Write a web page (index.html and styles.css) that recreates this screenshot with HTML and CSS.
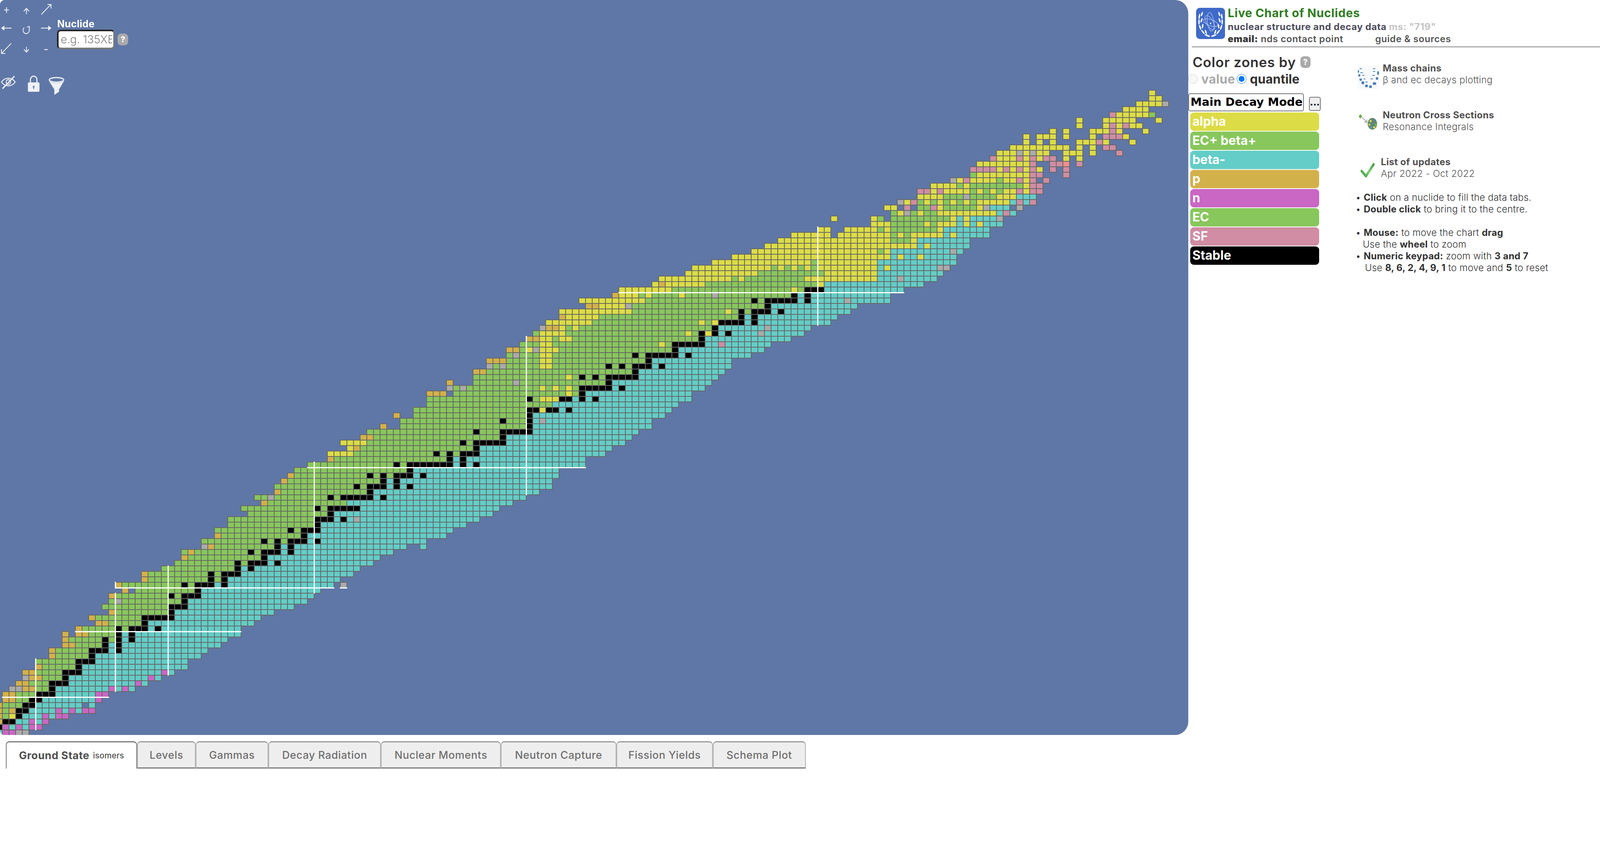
FILE: index.html
```html
<!DOCTYPE html>
<html lang="en">
<head>
<meta charset="utf-8">
<title>Live Chart of Nuclides</title>
<link rel="stylesheet" href="styles.css">
</head>
<body>
<div class="page">
  <main class="main">
    <section class="chart" id="chart-box">
      <canvas id="chart" class="chart-canvas" width="3042" height="1882"></canvas>
      <svg class="controls" viewBox="0 0 180 245" preserveAspectRatio="none">
        <g class="ln">
          <path d="M11 25.5H25M18 18.5V33"/>
          <path d="M73 36V22M65.5 29L73 21.5L80.5 29"/>
          <path d="M114 37L141 11M131 11.5H141V22"/>
          <path d="M12 72H32"/>
          <path d="M113 72H133"/>
          <path d="M31 111L4 137M4 126V137H15"/>
          <path d="M73 120V133M66 126.5L73 133.5L80 126.5"/>
          <path d="M122 127H132"/>
          <path d="M67 70.500A8.700 8.700 0 1 0 80.700 75"/>
          <path d="M74.500 69.500L81 68V75"/>
        </g>
        <path class="fl" d="M3 72L12 65.5V78.5Z"/>
        <path class="fl" d="M142 72L133 65.5V78.5Z"/>
        <path class="eye" d="M4 210C14 197 32 197 42 210C32 223 14 223 4 210Z"/>
        <path class="eye" d="M17 210a6 6 0 0 1 12 0a6 6 0 0 1 -12 0"/>
        <path class="slash" d="M8 226L39 196"/>
        <path class="eye thick" d="M84 212V204a9 9 0 0 1 18 0V212"/>
        <rect class="fl" x="77" y="211" width="32" height="24" rx="3"/>
        <circle class="hole" cx="93" cy="222" r="2.5"/>
        <rect class="hole" x="92" y="222" width="2" height="6"/>
        <path class="fl" d="M135 207C142 214 170 214 177 207L163 229V235L150 243V229Z"/>
        <ellipse class="eye thick" cx="156" cy="204.5" rx="20" ry="6"/>
      </svg>
      <div class="finder">
        <label class="finder-label" for="nuc">Nuclide</label>
        <div class="finder-row">
          <input id="nuc" class="finder-input" type="text" placeholder="e.g. 135XE">
          <span class="help">?</span>
        </div>
      </div>
    </section>
    <nav class="tabs">
      <div class="tab active">Ground State <small>isomers</small></div>
      <div class="tab">Levels</div>
      <div class="tab">Gammas</div>
      <div class="tab">Decay Radiation</div>
      <div class="tab">Nuclear Moments</div>
      <div class="tab">Neutron Capture</div>
      <div class="tab">Fission Yields</div>
      <div class="tab">Schema Plot</div>
    </nav>
  </main>
  <aside class="side">
    <header class="head">
      <svg class="logo" viewBox="0 0 80 80" preserveAspectRatio="none">
        <rect width="80" height="80" rx="10" fill="#3f6ac8"/>
        <g fill="#fff">
          <ellipse cx="9" cy="22" rx="2" ry="7" transform="rotate(10 9 22)"/>
          <ellipse cx="16" cy="16" rx="2" ry="6" transform="rotate(20 16 16)"/>
          <ellipse cx="8" cy="36" rx="2" ry="7"/>
          <ellipse cx="15" cy="32" rx="2" ry="6" transform="rotate(20 15 32)"/>
          <ellipse cx="11" cy="50" rx="2" ry="7" transform="rotate(-20 11 50)"/>
          <ellipse cx="18" cy="47" rx="2" ry="6" transform="rotate(10 18 47)"/>
          <ellipse cx="19" cy="62" rx="2" ry="7" transform="rotate(-40 19 62)"/>
          <ellipse cx="27" cy="62" rx="2" ry="6" transform="rotate(-20 27 62)"/>
          <ellipse cx="31" cy="71" rx="2" ry="8" transform="rotate(-70 31 71)"/>
          <ellipse cx="71" cy="22" rx="2" ry="7" transform="rotate(-10 71 22)"/>
          <ellipse cx="64" cy="16" rx="2" ry="6" transform="rotate(-20 64 16)"/>
          <ellipse cx="72" cy="36" rx="2" ry="7"/>
          <ellipse cx="65" cy="32" rx="2" ry="6" transform="rotate(-20 65 32)"/>
          <ellipse cx="69" cy="50" rx="2" ry="7" transform="rotate(20 69 50)"/>
          <ellipse cx="62" cy="47" rx="2" ry="6" transform="rotate(-10 62 47)"/>
          <ellipse cx="61" cy="62" rx="2" ry="7" transform="rotate(40 61 62)"/>
          <ellipse cx="53" cy="62" rx="2" ry="6" transform="rotate(20 53 62)"/>
          <ellipse cx="49" cy="71" rx="2" ry="8" transform="rotate(70 49 71)"/>
        </g>
        <g fill="none" stroke="#c4d2f2" stroke-width="1.2">
          <ellipse cx="40" cy="36" rx="9" ry="24" transform="rotate(-8 40 36)"/>
          <ellipse cx="40" cy="38" rx="21" ry="8" transform="rotate(18 40 38)"/>
          <ellipse cx="38" cy="38" rx="9" ry="21" transform="rotate(-32 38 38)"/>
        </g>
        <circle cx="40" cy="40" r="2" fill="#fff"/>
      </svg>
      <div class="brand">
        <h1 class="brand-title">Live Chart of Nuclides</h1>
        <p class="brand-sub">nuclear structure and decay data <span class="ms">ms: "719"</span></p>
        <p class="brand-links"><span><b>email:</b> nds contact point</span><span class="guide">guide &amp; sources</span></p>
      </div>
    </header>
    <div class="columns">
      <div class="zones">
        <h2 class="zones-title">Color zones by <span class="help large">?</span></h2>
        <div class="radios">
          <input class="radio" type="radio" name="mode" disabled>
          <span class="radio-off">value</span>
          <input class="radio" type="radio" name="mode" checked>
          <span class="radio-on">quantile</span>
        </div>
        <div class="select-row">
          <div class="select">Main Decay Mode</div>
          <button class="more" type="button">...</button>
        </div>
        <ul class="legend">
          <li class="alpha">alpha</li>
          <li class="ecb">EC+ beta+</li>
          <li class="beta">beta-</li>
          <li class="proton">p</li>
          <li class="neutron">n</li>
          <li class="ec">EC</li>
          <li class="sf">SF</li>
          <li class="stable">Stable</li>
        </ul>
      </div>
      <div class="info">
        <div class="link">
          <svg class="ico ico-mass" viewBox="0 0 60 59" preserveAspectRatio="none">
            <rect width="60" height="59" fill="#f7f9fb"/>
            <g fill="#4f7fb5">
              <rect x="5" y="6" width="6" height="2"/><rect x="42" y="6" width="6" height="2"/>
              <ellipse cx="1.5" cy="14" rx="2" ry="3.5"/><rect x="7" y="16" width="7" height="2"/>
              <rect x="42" y="13" width="6" height="2"/><ellipse cx="56" cy="18" rx="2.5" ry="5"/>
              <ellipse cx="4" cy="24" rx="3" ry="3"/><rect x="12" y="23" width="6" height="2"/>
              <rect x="40" y="23" width="7" height="2"/><ellipse cx="53" cy="32" rx="3.5" ry="3.5"/>
              <ellipse cx="8" cy="35" rx="3.5" ry="3"/><rect x="16" y="32" width="5" height="2"/>
              <rect x="35" y="32" width="7" height="2"/><ellipse cx="14" cy="43" rx="4" ry="4"/>
              <rect x="21" y="40" width="6" height="2"/><ellipse cx="46" cy="45" rx="5" ry="3.5"/>
              <ellipse cx="24" cy="51" rx="4" ry="3.5"/><ellipse cx="35" cy="53" rx="4" ry="3.5"/>
            </g>
          </svg>
          <div class="link-text"><b>Mass chains</b><span>β and ec decays plotting</span></div>
        </div>
        <div class="link">
          <svg class="ico ico-neutron" viewBox="0 0 51 40" preserveAspectRatio="none">
            <ellipse cx="4" cy="5" rx="4" ry="4.5" fill="#76a84e"/>
            <path d="M9 8L22 20M22 13V20H15" fill="none" stroke="#9a9a9a" stroke-width="1.8"/>
            <ellipse cx="37" cy="24" rx="13" ry="15" fill="#5f8a6a"/>
            <circle cx="32" cy="17" r="3" fill="#d7d94a"/><circle cx="42" cy="15" r="3" fill="#5f80b8"/>
            <circle cx="29" cy="26" r="3" fill="#b8cf50"/><circle cx="38" cy="24" r="3" fill="#5f80b8"/>
            <circle cx="46" cy="26" r="3" fill="#7bb552"/><circle cx="34" cy="33" r="3" fill="#6f8fc0"/>
            <circle cx="42" cy="33" r="3" fill="#d7d94a"/>
          </svg>
          <div class="link-text"><b>Neutron Cross Sections</b><span>Resonance Integrals</span></div>
        </div>
        <div class="link updates">
          <svg class="ico ico-check" viewBox="0 0 39 38" preserveAspectRatio="none">
            <defs>
              <linearGradient id="chk" x1="0" y1="1" x2="1" y2="0">
                <stop offset="0" stop-color="#3f9a3e"/><stop offset=".5" stop-color="#7fd07a"/><stop offset="1" stop-color="#4f9f4a"/>
              </linearGradient>
            </defs>
            <path d="M3 21L15 34L36 4" fill="none" stroke="url(#chk)" stroke-width="6.5" stroke-linecap="round" stroke-linejoin="round"/>
          </svg>
          <div class="link-text"><b>List of updates</b><span>Apr 2022 - Oct 2022</span></div>
        </div>
        <div class="howto">
          <p>• <b>Click</b> on a nuclide to fill the data tabs.</p>
          <p>• <b>Double click</b> to bring it to the centre.</p>
          <p class="gap">• <b>Mouse:</b> to move the chart <b>drag</b></p>
          <p class="ind1">Use the <b>wheel</b> to zoom</p>
          <p>• <b>Numeric keypad:</b> zoom with <b>3 and 7</b></p>
          <p class="ind2">Use <b>8, 6, 2, 4, 9, 1</b> to move and <b>5</b> to reset</p>
        </div>
      </div>
    </div>
  </aside>
</div>
<script src="chart.js"></script>
</body>
</html>
```
FILE: styles.css
```css
:root { --x: calc(100vw / 4418); }
* { box-sizing: border-box; }
html, body { margin: 0; padding: 0; background: #fff; overflow: hidden; }
body { font-family: "Inter", "Noto Sans", "Liberation Sans", sans-serif; color: #333; }
h1, h2, p, ul { margin: 0; padding: 0; }
ul { list-style: none; }

.page { display: flex; width: 100vw; height: 100vh; overflow: hidden; }
.main { flex: 0 0 calc(var(--x) * 3281); display: flex; flex-direction: column; min-width: 0; }

.chart { position: relative; width: 100%; height: 1882px; background: #5f77a6; border-radius: 12px 34px 34px 12px; overflow: hidden; }
.chart-canvas { display: block; }
.controls { position: absolute; left: 0; top: 0; width: calc(var(--x) * 180); height: 245px; }
.ln { fill: none; stroke: #eef1f6; stroke-width: 2.2; }
.fl { fill: #eef1f6; }
.eye { fill: none; stroke: #eef1f6; stroke-width: 2.4; }
.eye.thick { stroke-width: 3; }
.slash { stroke: #eef1f6; stroke-width: 3.4; stroke-linecap: round; }
.hole { fill: #5f77a6; }

.finder { position: absolute; left: calc(var(--x) * 158); top: 46px; display: flex; flex-direction: column; }
.finder-label { font-size: 25px; line-height: 30px; font-weight: 700; color: #fff; letter-spacing: .3px; }
.finder-row { display: flex; align-items: center; gap: calc(var(--x) * 8); }
.finder-input { width: calc(var(--x) * 159); height: 50px; padding: 0 3px 0 5px; border: 4px solid; border-color: #222 #777 #777 #222; border-radius: 9px; background: #fff; font: 300 28px "Inter", sans-serif; outline: none; }
.finder-input::placeholder { color: #7d7d7d; opacity: 1; }
.help { display: flex; align-items: center; justify-content: center; width: calc(var(--x) * 29); height: 30px; border-radius: 9px; background: #aaa; color: #fff; font-size: 20px; font-weight: 800; }

.tabs { display: flex; margin: 16px 0 0 calc(var(--x) * 16); }
.tab { flex: none; height: 70px; display: flex; align-items: center; justify-content: center; gap: 9px; background: #eee; border: 2px solid #b4b4b4; border-top: 3px solid #9a9a9a; border-bottom: 3px solid #7a7a7a; border-radius: 9px 9px 0 0; color: #6e6e6e; font-size: 27px; font-weight: 500; letter-spacing: .6px; }
.tab:nth-child(1) { width: calc(var(--x) * 363); }
.tab:nth-child(2) { width: calc(var(--x) * 161); }
.tab:nth-child(3) { width: calc(var(--x) * 201); }
.tab:nth-child(4) { width: calc(var(--x) * 311); }
.tab:nth-child(5) { width: calc(var(--x) * 331); }
.tab:nth-child(6) { width: calc(var(--x) * 319); }
.tab:nth-child(7) { width: calc(var(--x) * 266); }
.tab:nth-child(8) { width: calc(var(--x) * 257); }
.tab.active { background: #fff; border-color: #7a7a7a; border-bottom: 0; color: #4f4f4f; font-weight: 700; }
.tab small { font-size: 21px; font-weight: 500; letter-spacing: 0; color: #555; }

.side { flex: 1 1 auto; min-width: 0; display: flex; flex-direction: column; }
.head { display: flex; height: 121px; margin-left: calc(var(--x) * 10); padding: 20px 0 0 calc(var(--x) * 12); border-bottom: 2px solid #888; }
.logo { flex: none; width: calc(var(--x) * 80); height: 80px; }
.brand { display: flex; flex-direction: column; margin: -7px 0 0 calc(var(--x) * 7); }
.brand-title { font-size: 30px; line-height: 41px; font-weight: 700; color: #2f7d22; letter-spacing: .7px; }
.brand-sub { font-size: 24px; line-height: 30px; font-weight: 700; color: #4c4c5c; letter-spacing: .6px; }
.ms { color: #c4c4c4; }
.brand-links { font-size: 24px; line-height: 32px; font-weight: 600; color: #555; letter-spacing: .55px; display: flex; gap: calc(var(--x) * 88); }
.brand-links b { color: #3a3a3a; }

.columns { display: flex; }
.zones { flex: 0 0 calc(var(--x) * 462); display: flex; flex-direction: column; padding-top: 15px; }
.zones-title { margin-left: calc(var(--x) * 12); font-size: 35px; line-height: 46px; font-weight: 600; letter-spacing: .85px; color: #333; display: flex; align-items: center; gap: calc(var(--x) * 12); }
.help.large { width: calc(var(--x) * 28); font-size: 20px; letter-spacing: 0; }
.radios { display: flex; align-items: center; height: 40px; }
.radio { width: calc(var(--x) * 26); height: 26px; margin: 0; flex: none; }
.radio-off { margin: 0 calc(var(--x) * 5) 0 calc(var(--x) * 10); font-size: 32px; font-weight: 700; letter-spacing: .3px; color: #aaa; }
.radio-on { margin-left: calc(var(--x) * 10); font-size: 32px; font-weight: 700; color: #333; }
.select-row { display: flex; align-items: flex-end; gap: calc(var(--x) * 14); margin-top: 17px; }
.select { width: calc(var(--x) * 319); height: 46px; border: 2px solid #777; border-radius: 5px; background: #fff; padding-left: 4px; font: 700 29px/40px "DejaVu Sans", sans-serif; color: #000; white-space: nowrap; overflow: hidden; }
.more { width: calc(var(--x) * 33); height: 36px; padding: 0 0 8px; border: 2px solid #767676; border-radius: 5px; background: #efefef; font: 700 22px "DejaVu Sans", sans-serif; color: #111; margin-bottom: 1px; }
.legend { display: flex; flex-direction: column; gap: 2px; width: calc(var(--x) * 356); margin: 3px 0 0 calc(var(--x) * 6); }
.legend li { height: 47px; padding-left: 5px; border-radius: 9px; color: #fff; font-size: 32px; line-height: 46px; font-weight: 700; }
.alpha { background: #dcdc46; }
.ecb, .ec { background: #88c75c; }
.beta { background: #63cdc7; }
.proton { background: #d3b14a; }
.neutron { background: #ca66c4; }
.sf { background: #d08da3; }
.stable { background: #000; }

.info { flex: 1 1 auto; display: flex; flex-direction: column; padding-top: 39px; }
.link { display: flex; height: 120px; padding-left: calc(var(--x) * 6); align-items: flex-start; }
.ico { flex: none; }
.ico-mass { width: calc(var(--x) * 60); height: 59px; margin: 9px calc(var(--x) * 9) 0 0; }
.ico-neutron { width: calc(var(--x) * 51); height: 40px; margin: 13px calc(var(--x) * 14) 0 calc(var(--x) * 4); }
.ico-check { width: calc(var(--x) * 39); height: 38px; margin: 17px calc(var(--x) * 17) 0 calc(var(--x) * 8); }
.updates { height: 91px; }
.link-text { display: flex; flex-direction: column; font-size: 24px; line-height: 30px; color: #555; font-weight: 300; letter-spacing: .35px; }
.link-text b { font-weight: 700; color: #505050; }
.howto { font-size: 24px; line-height: 30px; font-weight: 300; color: #333; letter-spacing: .25px; }
.howto b { font-weight: 700; }
.gap { margin-top: 30px; }
.ind1 { padding-left: calc(var(--x) * 20); }
.ind2 { padding-left: calc(var(--x) * 26); }
```
FILE: chart.js
```js
var ROWS = {
1:"2 t n2 x2",2:"2 k n t n t n2",3:"2 p k2 t2 n t n",4:"2 p g a k t3 n t n2",
5:"2 p g p k2 t4 n t n t n2",6:"2 p g3 k2 t7 -1 t",7:"3 p2 g2 k2 t8 n",8:"3 p2 g3 k3 t6 n2",
9:"4 x2 p2 g2 k t8 n t n t",10:"5 p2 g3 k3 t10 n t",11:"6 x p2 g3 k t12 n t",12:"6 p2 g4 k3 t12 n t",
13:"8 p g5 k t16",14:"8 g6 k3 t14",15:"10 p g5 k t16",16:"10 p g5 k3 t k t13",
17:"12 p2 g4 k t k t15",18:"12 p g5 k g k t k t14",19:"12 p -1 p2 g4 k t k t16",20:"14 p g5 k g k3 t k t12",
21:"17 p2 g5 k t16",22:"16 p g7 k5 t13",23:"19 p g8 k t15",24:"18 g10 k3 t16",
25:"19 g x g9 k t18",26:"19 p g8 k g k3 t17",27:"21 p -1 g9 k t18",28:"20 p g9 k g k3 t k t16 -1 x",
29:"24 p g9 k g k t17",30:"24 p g9 k g k3 t17",31:"27 g11 k t k t16",32:"29 g9 k g k3 t k t14",
33:"30 p g11 k t17",34:"30 g p g8 k g k3 t k t15",35:"33 x p g9 k t k t17 -2 t",36:"33 g9 k g k g k3 t k t16",
37:"35 p g12 k t21",38:"35 g11 k g k3 t20",39:"37 g13 k t22",40:"37 g13 k3 t k t x t18",
41:"40 g12 k t24",42:"39 g11 k g k5 t21",43:"42 p g12 t25",44:"41 g2 x g8 k g k5 t k t21",
45:"44 p g13 k t25",46:"44 g12 k g k3 t k t k t21",47:"45 p g14 k t k t23",48:"46 p g11 k g k g k3 t k t20",
49:"47 g17 k t22",50:"49 g13 k g k7 t k t k t16",51:"52 p g17 k t k t18",52:"52 a4 g12 k g k g k3 t19",
53:"55 a p g17 k t20",54:"54 a4 g14 k g k5 t18",55:"57 p2 g19 k t19",56:"58 g16 k g3 k5 t16",
57:"60 p -2 g19 k t18",58:"63 g15 k g3 k t x t16",59:"62 p -2 g17 k t20",60:"65 g17 k2 a k2 t k t15",
61:"67 g19 t19",62:"67 g15 k g a3 k2 t k t k t14",63:"67 p3 -1 g17 a g k t16",
64:"70 x g x g11 a g a g a g k5 t k t12",65:"70 p -3 g6 x g13 k t15",66:"74 g14 a g k g k g k5 t12",
67:"74 p2 g22 k t13",68:"76 x g x g5 a2 g8 k g k g k3 t k t10",69:"76 p3 g5 a2 g14 k t12",
70:"79 g x g3 a2 g12 k g k5 t k t9",71:"79 p2 g a x a3 g17 k t13",72:"81 g3 a2 g16 a g k5 t2 s t7",
73:"82 p2 a2 g a2 g19 k t13",74:"83 g a4 g18 a g k a k t k t4 x t6",75:"84 x p2 a g a g20 k t7 x t6",
76:"85 a7 g16 a g a k4 t k t11",77:"87 p a5 g21 k t k t12",78:"87 a11 g14 a g k g k3 t k t10",
79:"91 p2 a4 x g20 k t13",80:"90 a10 g16 k g k5 t k t5 x t6",81:"95 p a3 g a g4 a g4 x g11 k t k t12",
82:"96 a8 g18 a g k3 t12",83:"101 a p a6 g17 a t15",84:"102 a11 g a g9 a11 t3 x t5",85:"106 a11 g10 a8 t10",
86:"107 a12 g a g a g a g a9 t a t7 x2",87:"110 a15 g a9 t12",88:"113 a24 t a t2 a t5",89:"116 a19 g a t9 x t",
90:"118 a23 t a t6",91:"120 a17 g3 a t8",92:"122 a6 -1 a8 g a g a5 t a t5",93:"126 a2 -2 a5 g a g7 a t7",
94:"134 a3 g5 a g a3 t a t a t3",95:"128 a -5 a g -1 g9 a t a t4 x",96:"137 g a x g a g2 a9 t s t",
97:"136 a2 -1 s -1 g2 s a g5 a x t3 -1 x",98:"138 x a s g a g a g a g a g a5 t s t s",99:"141 a4 g3 x g4 a3 t3",
100:"141 s2 a s a4 g a g a g a2 s a s2",101:"143 a4 g a g8 a s2",102:"146 x a s a4 g a2 s a s -1 s",
103:"149 g a8 s2 -3 s",104:"149 s4 a s a s a s a -1 s -1 s",105:"150 a8 s -2 s2 r -1 s",
106:"152 s a3 s a s a s2 -1 a -1 a",107:"153 a3 x a x a2 -2 a3 -1 a -3 s",108:"155 a9 -1 a -1 a -1 s2",
109:"157 a -1 a -1 a -3 a3 s a -3 a",110:"157 a -1 a3 -1 a -3 a -1 s3 a",111:"161 a -1 a -3 a3 s a -3 a",
112:"165 a -3 a s a s a2",113:"165 a -3 a5 -3 a",114:"170 s a5 g",115:"172 a4",116:"174 a4 x",117:"176 a2",118:"176 a"
};
var COLORS = { a:"#dcdc46", g:"#88c75c", t:"#63cdc7", p:"#d3b14a", n:"#ca66c4", s:"#d08da3", k:"#000000", x:"#aaaaaa", r:"#f08f8a" };
var MAGIC = { 8:1, 20:1, 28:1, 50:1, 82:1, 126:1 };

function cells() {
  var out = [];
  Object.keys(ROWS).forEach(function (key) {
    var z = +key, parts = ROWS[key].split(" "), n = +parts[0];
    parts.slice(1).forEach(function (tok) {
      if (tok.charAt(0) === "-") { n += +tok.slice(1); return; }
      var count = tok.length > 1 ? +tok.slice(1) : 1;
      for (var i = 0; i < count; i++) { out.push({ z: z, n: n++, c: COLORS[tok.charAt(0)] }); }
    });
  });
  return out;
}

(function draw() {
  var box = document.getElementById("chart-box"), canvas = document.getElementById("chart");
  var width = box.clientWidth, sx = width / 3281;
  canvas.width = width;
  canvas.style.width = width + "px";
  function cellX(n) { return Math.round((6.67 + 18.3 * (n - 3)) * sx); }
  function cellY(z) { return Math.round(1883.3 - 14 * z); }
  var ctx = canvas.getContext("2d"), list = cells();
  list.forEach(function (c) {
    ctx.fillStyle = c.c;
    ctx.fillRect(cellX(c.n), cellY(c.z), cellX(c.n + 1) - cellX(c.n), 14);
  });
  ctx.strokeStyle = "#666666";
  ctx.lineWidth = 2;
  list.forEach(function (c) {
    ctx.strokeRect(cellX(c.n), cellY(c.z), cellX(c.n + 1) - cellX(c.n), 14);
  });
  ctx.fillStyle = "#ffffff";
  list.forEach(function (c) {
    var x = cellX(c.n), y = cellY(c.z), w = cellX(c.n + 1) - x;
    if (MAGIC[c.n]) { ctx.fillRect(x - 1, y - 1, 3, 16); }
    if (MAGIC[c.z]) { ctx.fillRect(x - 1, y + 13, w + 2, 3); }
  });
})();
```
